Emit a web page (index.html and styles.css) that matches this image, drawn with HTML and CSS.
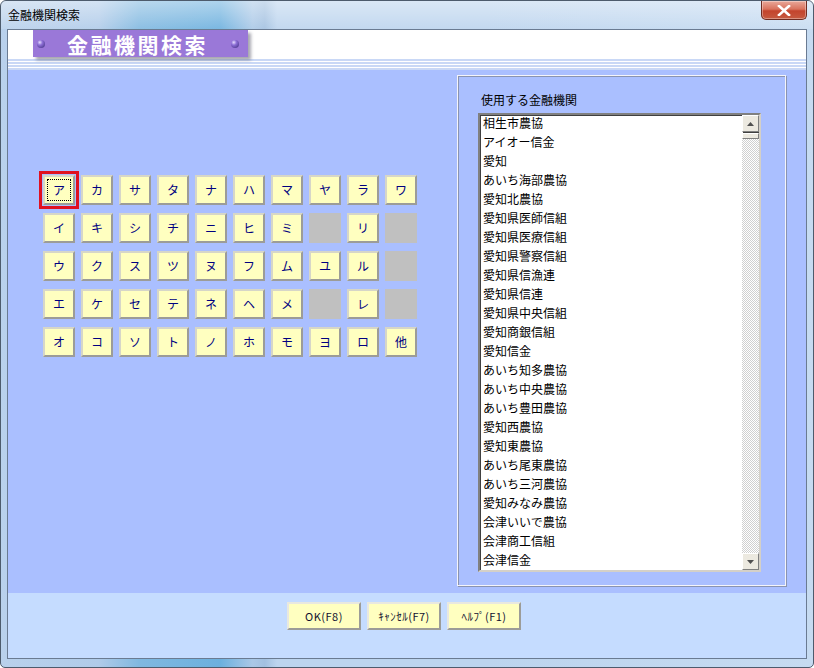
FILE: index.html
```html
<!DOCTYPE html>
<html lang="ja">
<head>
<meta charset="utf-8">
<title>金融機関検索</title>
<link rel="stylesheet" href="styles.css">
</head>
<body>
<div class="window">
  <div class="titlebar">
    <span class="title">金融機関検索</span>
    <div class="close">
      <svg width="14" height="11" viewBox="0 0 14 11"><path d="M2 1 L12 10 M12 1 L2 10" stroke="#fff" stroke-width="2.6" stroke-linecap="square"/></svg>
    </div>
  </div>
  <div class="client">
    <div class="header">
      <div class="banner">
        <span class="dot"></span>
        <span class="banner-text">金融機関検索</span>
        <span class="dot"></span>
      </div>
    </div>
    <div class="stripes"></div>
    <div class="main">
      <div class="kana">
        <div class="key focus"><span class="focus-rect">ア</span></div>
        <div class="key">カ</div><div class="key">サ</div><div class="key">タ</div><div class="key">ナ</div>
        <div class="key">ハ</div><div class="key">マ</div><div class="key">ヤ</div><div class="key">ラ</div><div class="key">ワ</div>

        <div class="key">イ</div><div class="key">キ</div><div class="key">シ</div><div class="key">チ</div><div class="key">ニ</div>
        <div class="key">ヒ</div><div class="key">ミ</div><div class="key blank"></div><div class="key">リ</div><div class="key blank"></div>

        <div class="key">ウ</div><div class="key">ク</div><div class="key">ス</div><div class="key">ツ</div><div class="key">ヌ</div>
        <div class="key">フ</div><div class="key">ム</div><div class="key">ユ</div><div class="key">ル</div><div class="key blank"></div>

        <div class="key">エ</div><div class="key">ケ</div><div class="key">セ</div><div class="key">テ</div><div class="key">ネ</div>
        <div class="key">ヘ</div><div class="key">メ</div><div class="key blank"></div><div class="key">レ</div><div class="key blank"></div>

        <div class="key">オ</div><div class="key">コ</div><div class="key">ソ</div><div class="key">ト</div><div class="key">ノ</div>
        <div class="key">ホ</div><div class="key">モ</div><div class="key">ヨ</div><div class="key">ロ</div><div class="key">他</div>
      </div>
      <div class="group">
        <div class="group-label">使用する金融機関</div>
        <div class="listbox">
          <ul class="items">
            <li>相生市農協</li>
            <li>アイオー信金</li>
            <li>愛知</li>
            <li>あいち海部農協</li>
            <li>愛知北農協</li>
            <li>愛知県医師信組</li>
            <li>愛知県医療信組</li>
            <li>愛知県警察信組</li>
            <li>愛知県信漁連</li>
            <li>愛知県信連</li>
            <li>愛知県中央信組</li>
            <li>愛知商銀信組</li>
            <li>愛知信金</li>
            <li>あいち知多農協</li>
            <li>あいち中央農協</li>
            <li>あいち豊田農協</li>
            <li>愛知西農協</li>
            <li>愛知東農協</li>
            <li>あいち尾東農協</li>
            <li>あいち三河農協</li>
            <li>愛知みなみ農協</li>
            <li>会津いいで農協</li>
            <li>会津商工信組</li>
            <li>会津信金</li>
          </ul>
          <div class="scrollbar">
            <div class="sb-btn"><svg width="7" height="4" viewBox="0 0 7 4"><path d="M3.5 0 L7 4 L0 4 Z" fill="#505050"/></svg></div>
            <div class="sb-thumb"></div>
            <div class="sb-track"></div>
            <div class="sb-btn"><svg width="7" height="4" viewBox="0 0 7 4"><path d="M0 0 L7 0 L3.5 4 Z" fill="#505050"/></svg></div>
          </div>
        </div>
      </div>
    </div>
    <div class="footer">
      <div class="btn">OK(F8)</div>
      <div class="btn">ｷｬﾝｾﾙ(F7)</div>
      <div class="btn">ﾍﾙﾌﾟ(F1)</div>
    </div>
  </div>
</div>
</body>
</html>
```

FILE: styles.css
```css
* { box-sizing: border-box; }

html, body {
  margin: 0;
  padding: 0;
  background: #ffffff;
}

body {
  font-family: "Noto Sans CJK JP", "Noto Sans", sans-serif;
  font-size: 12px;
  color: #000;
}

.window {
  width: 814px;
  height: 668px;
  border: 1px solid #4d5b6c;
  border-radius: 6px 6px 5px 5px;
  background: linear-gradient(90deg, #b9d1ec 0%, #b0cbe9 12%, #80b8e0 17%, #6cb0de 27%, #aac8e7 31%, #a2c0e0 32.5%, #bcd4ee 34%, #bcd4ee 60%, #c6dbf1 100%);
  display: flex;
  flex-direction: column;
  overflow: hidden;
}

.titlebar {
  height: 28px;
  display: flex;
  align-items: flex-start;
  background: linear-gradient(180deg, rgba(255,255,255,0.45), rgba(255,255,255,0.1));
}

.title {
  margin: 7px 0 0 7px;
  font-size: 12px;
  line-height: 14px;
  color: #000;
}

.close {
  margin-left: auto;
  margin-right: 6px;
  width: 46px;
  height: 19px;
  border: 1px solid #6e2c22;
  border-top: none;
  border-radius: 0 0 5px 5px;
  background: linear-gradient(180deg, #e9a89a 0%, #d9735e 45%, #c3442d 55%, #c65a40 100%);
  box-shadow: inset 0 0 0 1px rgba(255,255,255,0.35);
  display: flex;
  align-items: center;
  justify-content: center;
}

.client {
  margin: 0 6px;
  height: 630px;
  border: 1px solid #6a7b92;
  display: flex;
  flex-direction: column;
  background: #fff;
}

.header {
  height: 28px;
  background: #ffffff;
  padding-left: 25px;
}

.banner {
  width: 215px;
  height: 27px;
  background: #9a78d8;
  box-shadow: 3px 3px 3px rgba(60, 60, 80, 0.45);
  display: flex;
  align-items: center;
  padding: 0 0 0 4px;
  position: relative;
  z-index: 1;
}

.dot {
  width: 8px;
  height: 8px;
  border-radius: 50%;
  background: radial-gradient(circle at 35% 30%, #e6dcff 0%, #8d6fd6 35%, #3b2a7a 100%);
}

.banner-text {
  color: #ffffff;
  font-size: 21px;
  font-weight: 700;
  letter-spacing: 2.5px;
  line-height: 24px;
  margin: 0 23px 0 22px;
}

.stripes {
  height: 12px;
  background: repeating-linear-gradient(180deg, #ffffff 0px, #ffffff 1px, #c9d8f6 1px, #c9d8f6 3px);
}

.main {
  height: 523px;
  background: #aabfff;
  display: flex;
  justify-content: space-between;
  align-items: flex-start;
  padding: 5px 20px 7px 35px;
}

.kana {
  margin-top: 100px;
  display: grid;
  grid-template-columns: repeat(10, 32px);
  grid-auto-rows: 30px;
  column-gap: 6px;
  row-gap: 8px;
}

.key {
  background: #ffffc0;
  border-style: solid;
  border-width: 2px;
  border-color: #d6d6c8 #9c9c98 #9c9c98 #d6d6c8;
  color: #000080;
  font-size: 12px;
  display: flex;
  align-items: center;
  justify-content: center;
  line-height: 1;
}

.key.blank {
  background: #c0c0c0;
  border-color: #c0c0c0;
}

.key.focus {
  outline: 3px solid #e01020;
  outline-offset: 1px;
}

.focus-rect {
  width: 24px;
  height: 22px;
  border: 1px dotted #000;
  display: flex;
  align-items: center;
  justify-content: center;
}

.group {
  width: 329px;
  height: 511px;
  border: 1px solid #f4f4fa;
  box-shadow: inset 1px 1px 0 #8a94b0, 1px 1px 0 #8a94b0;
  padding: 17px 0 0 20px;
}

.group-label {
  font-size: 12px;
  line-height: 14px;
  margin-left: 3px;
  height: 20px;
}

.listbox {
  width: 283px;
  height: 459px;
  background: #ffffff;
  border-style: solid;
  border-width: 2px;
  border-color: #808080 #d4d0c8 #d4d0c8 #808080;
  box-shadow: inset 1px 1px 0 #404040;
  display: flex;
  overflow: hidden;
}

.items {
  list-style: none;
  margin: 0;
  padding: 0 0 0 3px;
  flex: 1;
}

.items li {
  height: 19px;
  line-height: 16px;
  font-size: 12px;
  white-space: nowrap;
}

.scrollbar {
  width: 17px;
  display: flex;
  flex-direction: column;
}

.sb-btn {
  height: 17px;
  background: #ece9e0;
  border-style: solid;
  border-width: 1px;
  border-color: #ffffff #808080 #808080 #ffffff;
  box-shadow: 1px 1px 0 #404040;
  display: flex;
  align-items: center;
  justify-content: center;
}

.sb-thumb {
  height: 6px;
  background: #ece9e0;
  border-style: solid;
  border-width: 1px;
  border-color: #ffffff #808080 #808080 #ffffff;
  margin-top: 1px;
}

.sb-track {
  flex: 1;
  background: repeating-conic-gradient(#d0d0d0 0 25%, #ffffff 0 50%) 0 0 / 2px 2px;
}

.footer {
  flex: 1;
  background: #c5dcff;
  display: flex;
  justify-content: center;
  align-items: flex-start;
  gap: 6px;
  padding: 9px 6px 0 0;
}

.btn {
  width: 74px;
  height: 28px;
  background: #ffffc0;
  border-style: solid;
  border-width: 2px;
  border-color: #e8e8e0 #9c9c98 #9c9c98 #e8e8e0;
  color: #101030;
  font-size: 11px;
  display: flex;
  align-items: center;
  justify-content: center;
  letter-spacing: 0.5px;
}
```
